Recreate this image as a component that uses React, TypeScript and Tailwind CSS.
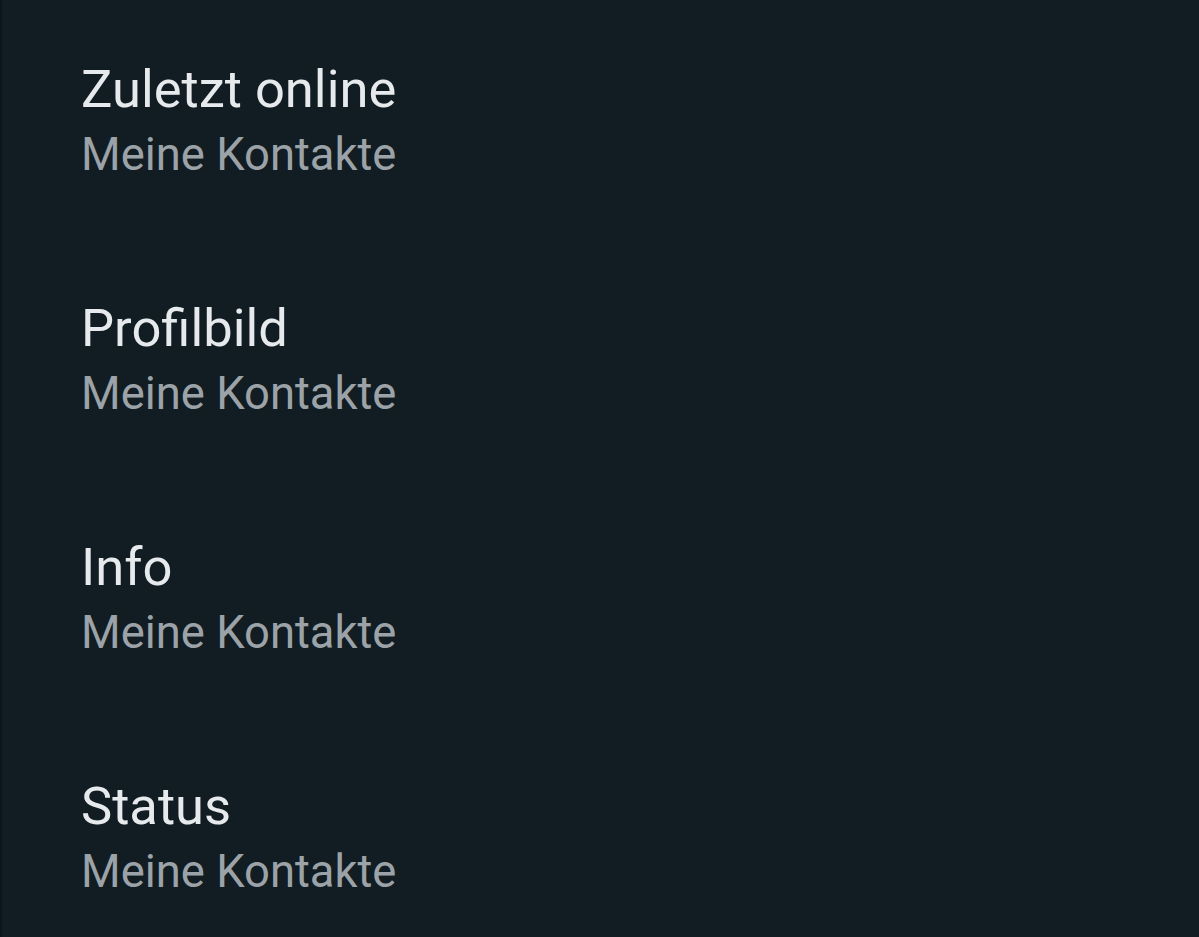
const items = [
  { title: "Zuletzt online", value: "Meine Kontakte" },
  { title: "Profilbild", value: "Meine Kontakte" },
  { title: "Info", value: "Meine Kontakte" },
  { title: "Status", value: "Meine Kontakte" },
]

export default function App() {
  return (
    <div
      className="flex min-h-[937px] w-full flex-col border-l-2 border-[#0c151b] bg-[#121c23]"
      style={{ fontFamily: "Roboto, 'Noto Sans', sans-serif" }}
    >
      {items.map((item) => (
        <div key={item.title} className="flex h-[239px] flex-col justify-center pl-[79px]">
          <div className="text-[52.5px] leading-[60px] text-[#e6eaec]">{item.title}</div>
          <div className="mt-[10px] text-[45.4px] leading-[52px] text-[#9ba3a8]">{item.value}</div>
        </div>
      ))}
    </div>
  )
}
